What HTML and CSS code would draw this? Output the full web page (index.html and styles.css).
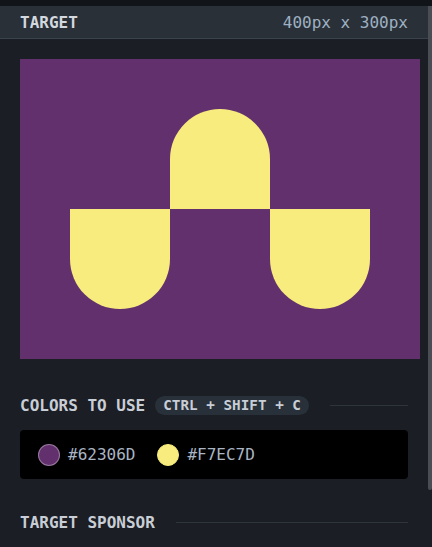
FILE: index.html
```html
<!DOCTYPE html>
<html>
<head>
<meta charset="utf-8">
<link rel="stylesheet" href="styles.css">
</head>
<body>
<div class="topstrip"></div>
<div class="frame">
  <div class="panel">
    <div class="header">
      <span class="title">TARGET</span>
      <span class="dims">400px x 300px</span>
    </div>
    <div class="content">
      <div class="target">
        <div class="shape left"></div>
        <div class="shape mid"></div>
        <div class="shape right"></div>
      </div>
      <div class="section-head colors-head">
        <span class="label">COLORS TO USE</span>
        <span class="pill">CTRL + SHIFT + C</span>
        <span class="rule"></span>
      </div>
      <div class="colors">
        <div class="swatch"><span class="dot purple"></span><span class="hex">#62306D</span></div>
        <div class="swatch"><span class="dot yellow"></span><span class="hex">#F7EC7D</span></div>
      </div>
      <div class="section-head sponsor-head">
        <span class="label">TARGET SPONSOR</span>
        <span class="rule"></span>
      </div>
    </div>
  </div>
  <div class="scrollbar"><div class="thumb"></div></div>
</div>
</body>
</html>
```
FILE: styles.css
```css
html, body {
  margin: 0;
  padding: 0;
  background: #1b1e24;
  height: 547px;
  overflow: hidden;
}
body {
  font-family: "DejaVu Sans Mono", "Liberation Mono", monospace;
  color: #c9ced6;
}
.topstrip {
  height: 6px;
  background: #111418;
}
.frame {
  display: flex;
  height: 541px;
}
.panel {
  flex: 1;
  min-width: 0;
}
.scrollbar {
  width: 4px;
  background: #1b1e24;
}
.thumb {
  height: 484px;
  background: #4a4e54;
  border-radius: 0 0 3px 3px;
}
.header {
  height: 32px;
  background: #293038;
  border-bottom: 1px solid #3a434c;
  display: flex;
  align-items: center;
  justify-content: space-between;
  padding: 0 20px;
  font-size: 16px;
}
.title {
  font-weight: bold;
  color: #d4d8df;
}
.dims {
  color: #9fb0c2;
}
.content {
  padding: 20px 20px 0 20px;
}
.target {
  width: 400px;
  height: 300px;
  background: #62306D;
  position: relative;
}
.shape {
  position: absolute;
  width: 100px;
  height: 100px;
  background: #F7EC7D;
}
.left {
  left: 50px;
  top: 150px;
  border-radius: 0 0 50px 50px;
}
.mid {
  left: 150px;
  top: 50px;
  border-radius: 50px 50px 0 0;
}
.right {
  left: 250px;
  top: 150px;
  border-radius: 0 0 50px 50px;
}
.section-head {
  display: flex;
  align-items: center;
  width: 388px;
}
.colors-head {
  margin-top: 36px;
  height: 20px;
}
.label {
  font-weight: bold;
  font-size: 16px;
  color: #c9ced6;
  white-space: nowrap;
}
.pill {
  margin-left: 10px;
  background: #28313a;
  border-radius: 10px;
  padding: 0 8px;
  height: 19px;
  line-height: 19px;
  font-size: 14.3px;
  font-weight: bold;
  color: #c9ced6;
  white-space: nowrap;
}
.rule {
  flex: 1;
  height: 1px;
  background: #2d343c;
  margin-left: 21px;
}
.colors {
  margin-top: 15px;
  width: 388px;
  height: 49px;
  background: #000;
  border-radius: 4px;
  display: flex;
  align-items: center;
  padding-left: 18px;
  box-sizing: border-box;
  gap: 22px;
}
.swatch {
  display: flex;
  align-items: center;
  gap: 8px;
}
.dot {
  width: 20px;
  height: 20px;
  border-radius: 50%;
  border: 1px solid rgba(255,255,255,0.35);
}
.purple { background: #62306D; }
.yellow { background: #F7EC7D; border-color: #F7EC7D; }
.hex {
  font-size: 16px;
  color: #a9b5c4;
}
.sponsor-head {
  margin-top: 33px;
  height: 20px;
}
```
